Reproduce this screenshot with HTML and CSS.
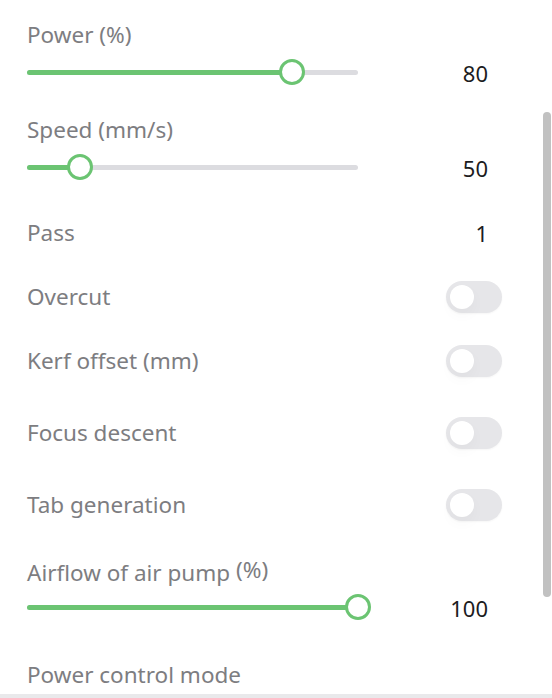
FILE: index.html
```html
<!DOCTYPE html>
<html lang="en">
<head>
    <meta charset="UTF-8">
    <meta name="viewport" content="width=device-width, initial-scale=1.0">
    <title>Laser parameters</title>
    <link rel="stylesheet" href="styles.css">
</head>
<body>
    <div class="panel">
        <div class="params">
            <div class="field">
                <div class="label">Power (%)</div>
                <div class="slider-row">
                    <div class="track">
                        <div class="fill" style="width: 80%"></div>
                        <div class="thumb" style="left: 80%"></div>
                    </div>
                    <div class="value">80</div>
                </div>
            </div>

            <div class="field">
                <div class="label">Speed (mm/s)</div>
                <div class="slider-row">
                    <div class="track">
                        <div class="fill" style="width: 16%"></div>
                        <div class="thumb" style="left: 16%"></div>
                    </div>
                    <div class="value">50</div>
                </div>
            </div>

            <div class="row">
                <div class="label">Pass</div>
                <div class="value">1</div>
            </div>

            <div class="row">
                <div class="label">Overcut</div>
                <div class="switch"><span class="knob"></span></div>
            </div>

            <div class="row">
                <div class="label">Kerf offset (mm)</div>
                <div class="switch"><span class="knob"></span></div>
            </div>

            <div class="row loose">
                <div class="label">Focus descent</div>
                <div class="switch"><span class="knob"></span></div>
            </div>

            <div class="row loose">
                <div class="label">Tab generation</div>
                <div class="switch"><span class="knob"></span></div>
            </div>

            <div class="field loose">
                <div class="label">Airflow of air pump <span class="unit">(%)</span></div>
                <div class="slider-row">
                    <div class="track">
                        <div class="fill" style="width: 100%"></div>
                        <div class="thumb" style="left: 100%"></div>
                    </div>
                    <div class="value">100</div>
                </div>
            </div>

            <div class="field wide">
                <div class="label">Power control mode</div>
            </div>
        </div>
        <div class="scrollbar"></div>
    </div>
    <div class="footer"></div>
</body>
</html>
```

FILE: styles.css
```css
body {
    margin: 0;
    font-family: 'Noto Sans', 'Open Sans', sans-serif;
    background-color: #ffffff;
}

.panel {
    position: relative;
    height: 694px;
    overflow: hidden;
}

.params {
    display: flex;
    flex-direction: column;
    padding: 20px 50px 0 27px;
}

.field + .field {
    margin-top: 21px;
}

.field + .row {
    margin-top: 22px;
}

.row + .row {
    margin-top: 20px;
}

.loose,
.row + .loose {
    margin-top: 28px;
}

.wide {
    margin-top: 31px !important;
}

.label {
    height: 30px;
    line-height: 30px;
    font-size: 22.5px;
    color: #7d7d81;
    white-space: nowrap;
}

.unit {
    vertical-align: 3px;
}

.value {
    font-size: 22px;
    color: #1c1c1e;
    text-align: right;
    padding-right: 14px;
}

.slider-row {
    display: flex;
    align-items: center;
    height: 44px;
}

.slider-row .value {
    flex: 1;
    padding-top: 1px;
}

.track {
    position: relative;
    width: 331px;
    height: 5px;
    border-radius: 3px;
    background-color: #dcdce0;
}

.fill {
    height: 100%;
    border-radius: 3px;
    background-color: #6bc472;
}

.thumb {
    position: absolute;
    top: 50%;
    width: 20px;
    height: 20px;
    margin: -13px 0 0 -13px;
    border: 3px solid #6bc472;
    border-radius: 50%;
    background-color: #ffffff;
}

.row {
    display: flex;
    align-items: center;
    justify-content: space-between;
    height: 44px;
}

.switch {
    position: relative;
    width: 56px;
    height: 32px;
    border-radius: 16px;
    background-color: #e6e6e9;
    box-shadow: 0 1px 2px rgba(0, 0, 0, 0.04);
}

.knob {
    position: absolute;
    left: 4px;
    top: 4px;
    width: 24px;
    height: 24px;
    border-radius: 50%;
    background-color: #ffffff;
    box-shadow: 0 6px 14px rgba(0, 0, 0, 0.03);
}

.scrollbar {
    position: absolute;
    right: 1px;
    top: 112px;
    width: 8px;
    height: 485px;
    border-radius: 4px;
    background-color: #c1c1c1;
}

.footer {
    height: 4px;
    background-color: #e9e9eb;
}
```
